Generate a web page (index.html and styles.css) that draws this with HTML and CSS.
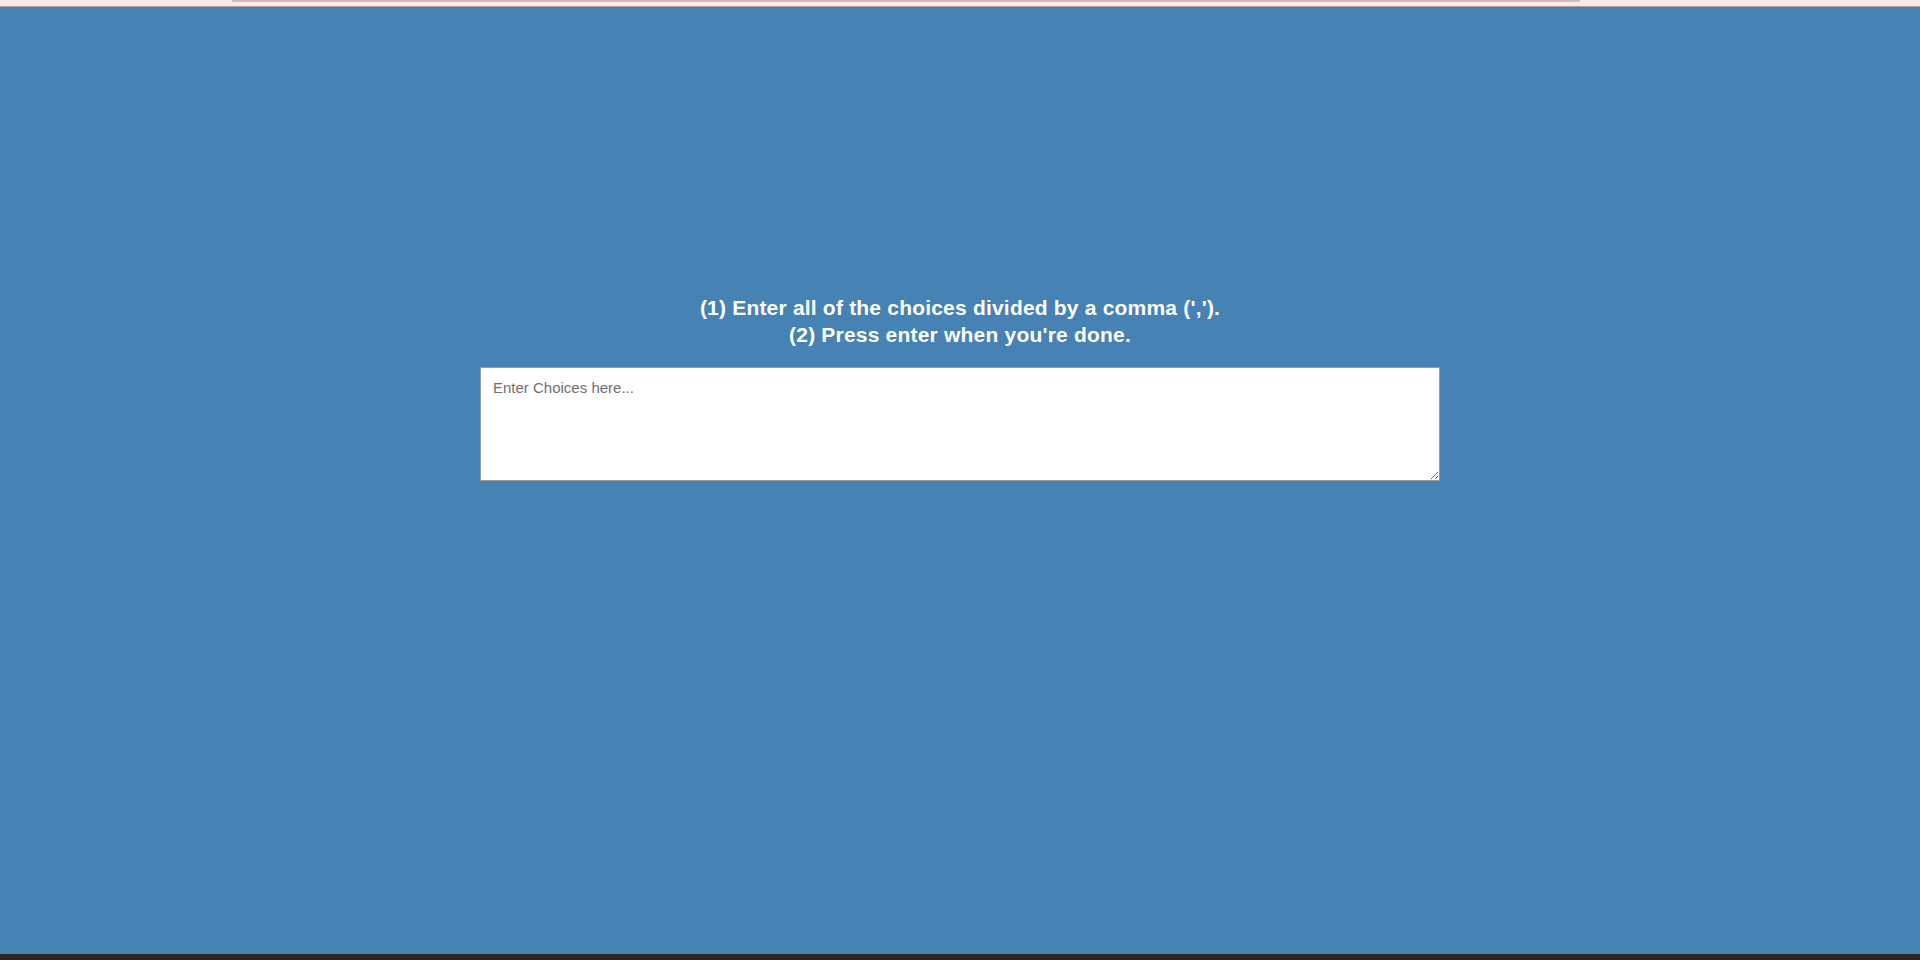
FILE: index.html
```html
<!DOCTYPE html>
<html>
<head>
<meta charset="utf-8">
<link rel="stylesheet" href="styles.css">
</head>
<body>
<div class="topstrip"><div class="topbar"></div></div>
<main class="main">
  <h1 class="title">(1) Enter all of the choices divided by a comma (',').<br>(2) Press enter when you're done.</h1>
  <textarea class="choices" placeholder="Enter Choices here..."></textarea>
</main>
<div class="bottombar"></div>
</body>
</html>
```
FILE: styles.css
```css
html, body {
  margin: 0;
  padding: 0;
  height: 100%;
}
body {
  background: #4682b4;
  display: flex;
  flex-direction: column;
  font-family: "Liberation Sans", Arial, sans-serif;
}
.topstrip {
  height: 6px;
  background: #f9ebeb;
  border-bottom: 1px solid #b39c9a;
  padding-left: 232px;
  padding-right: 340px;
}
.topbar {
  height: 2px;
  background: #d9b8b8;
}
.main {
  flex: 1;
  display: flex;
  flex-direction: column;
  align-items: center;
  padding-top: 287px;
}
.title {
  margin: 0 0 19px;
  color: #fff;
  font-size: 21px;
  line-height: 27px;
  font-weight: 700;
  letter-spacing: 0.2px;
  text-align: center;
}
.choices {
  width: 960px;
  height: 114px;
  box-sizing: border-box;
  border: 1px solid #9a9a9a;
  padding: 11px 12px;
  font-family: "Liberation Sans", Arial, sans-serif;
  font-size: 15px;
  background: #fff;
  margin: 0;
}
.choices::placeholder {
  color: #707070;
}
.bottombar {
  height: 6px;
  background: #2e2422;
}
```
